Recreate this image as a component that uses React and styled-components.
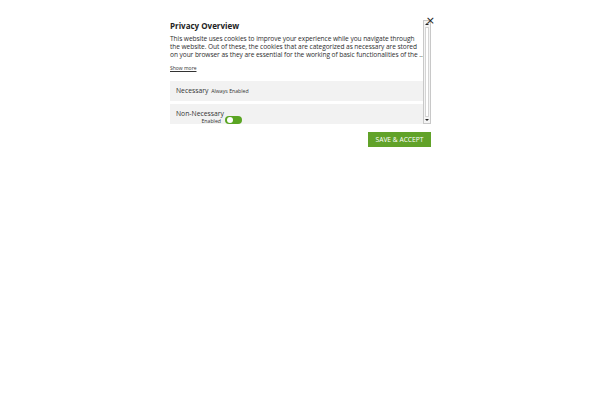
import React, { useState } from 'react';
import styled, { createGlobalStyle } from 'styled-components';

const GlobalStyle = createGlobalStyle`
  body {
    margin: 0;
    background: #ffffff;
    font-family: "Open Sans", "Liberation Sans", sans-serif;
    color: #333333;
  }
`;

const Page = styled.div`
  padding: 18px 0 0 165px;
`;

const Modal = styled.div`
  position: relative;
  width: 266px;
`;

const CloseButton = styled.button`
  position: absolute;
  top: -3px;
  right: -4px;
  padding: 0;
  border: none;
  background: none;
  font-size: 11px;
  line-height: 1;
  color: #222222;
  cursor: pointer;
  font-family: "DejaVu Sans", sans-serif;
`;

const ScrollArea = styled.div`
  display: flex;
  height: 106px;
`;

const Content = styled.div`
  flex: 1;
  overflow: hidden;
  padding-left: 5px;
`;

const Scrollbar = styled.div`
  width: 6px;
  margin-top: 2px;
  border: 1px solid #c8c8c8;
  background: #f4f4f4;
  display: flex;
  flex-direction: column;
  align-items: center;
`;

const Arrow = styled.div`
  width: 0;
  height: 0;
  margin: 2px 0;
  border-left: 2px solid transparent;
  border-right: 2px solid transparent;
  ${(p) => (p.$down ? 'border-top: 2px solid #222;' : 'border-bottom: 2px solid #222;')}
`;

const Thumb = styled.div`
  flex: 1;
  width: 4px;
  background: #ffffff;
  border: 1px solid #d4d4d4;
  box-sizing: border-box;
`;

const Title = styled.h2`
  margin: 3px 0 0;
  font-size: 8px;
  line-height: 10px;
  font-weight: 700;
  color: #222222;
`;

const Text = styled.p`
  margin: 4px 0 0;
  font-size: 6.6px;
  line-height: 8px;
  letter-spacing: -0.07px;
  color: #2e2e2e;
`;

const Line = styled.span`
  display: block;
  white-space: nowrap;
`;

const ShowMore = styled.a`
  display: block;
  margin-top: 6px;
  font-size: 5px;
  line-height: 7px;
  color: #333333;
  text-decoration: underline;
  cursor: pointer;
`;

const Panel = styled.div`
  margin-top: ${(p) => p.$gap}px;
  height: ${(p) => p.$height}px;
  background: #f2f2f2;
  padding-left: 6px;
  display: flex;
  align-items: ${(p) => (p.$top ? 'flex-start' : 'center')};
  ${(p) => p.$top && 'padding-top: 6px;'}
  box-sizing: border-box;
`;

const PanelName = styled.span`
  font-size: 6.8px;
  line-height: 8px;
  color: #333333;
`;

const PanelNote = styled.span`
  font-size: 5.2px;
  color: #333333;
  margin-left: 1px;
`;

const Stack = styled.div`
  display: flex;
  flex-direction: column;
  align-items: flex-end;
`;

const StackNote = styled.span`
  font-size: 5.2px;
  line-height: 6px;
  margin-right: 3px;
  color: #333333;
`;

const Toggle = styled.button`
  margin: 6px 0 0 1px;
  width: 17px;
  height: 8px;
  padding: 0;
  border: none;
  border-radius: 4px;
  background: ${(p) => (p.$on ? '#5aa523' : '#cccccc')};
  position: relative;
  cursor: pointer;

  &::after {
    content: '';
    position: absolute;
    top: 1px;
    left: 1.5px;
    width: 6px;
    height: 6px;
    border-radius: 50%;
    background: #ffffff;
  }
`;

const Footer = styled.div`
  display: flex;
  justify-content: flex-end;
  margin-top: 8px;
`;

const SaveButton = styled.button`
  width: 63px;
  height: 15px;
  padding: 0;
  border: none;
  background: #61a229;
  color: #ffffff;
  font-family: "Open Sans", "Liberation Sans", sans-serif;
  font-size: 6.7px;
  text-transform: uppercase;
  cursor: pointer;
`;

const App = () => {
  const [enabled, setEnabled] = useState(true);

  return (
    <>
      <GlobalStyle />
      <Page>
        <Modal>
          <CloseButton aria-label="Close">×</CloseButton>
          <ScrollArea>
            <Content>
              <Title>Privacy Overview</Title>
              <Text>
                <Line>This website uses cookies to improve your experience while you navigate through</Line>
                <Line>the website. Out of these, the cookies that are categorized as necessary are stored</Line>
                <Line>on your browser as they are essential for the working of basic functionalities of the ...</Line>
              </Text>
              <ShowMore>Show more</ShowMore>
              <Panel $gap={9} $height={20}>
                <PanelName>
                  Necessary <PanelNote>Always Enabled</PanelNote>
                </PanelName>
              </Panel>
              <Panel $gap={3} $height={26} $top>
                <Stack>
                  <PanelName>Non-Necessary</PanelName>
                  <StackNote>Enabled</StackNote>
                </Stack>
                <Toggle $on={enabled} onClick={() => setEnabled(!enabled)} />
              </Panel>
            </Content>
            <Scrollbar>
              <Arrow />
              <Thumb />
              <Arrow $down />
            </Scrollbar>
          </ScrollArea>
          <Footer>
            <SaveButton>Save &amp; Accept</SaveButton>
          </Footer>
        </Modal>
      </Page>
    </>
  );
};

export default App;
